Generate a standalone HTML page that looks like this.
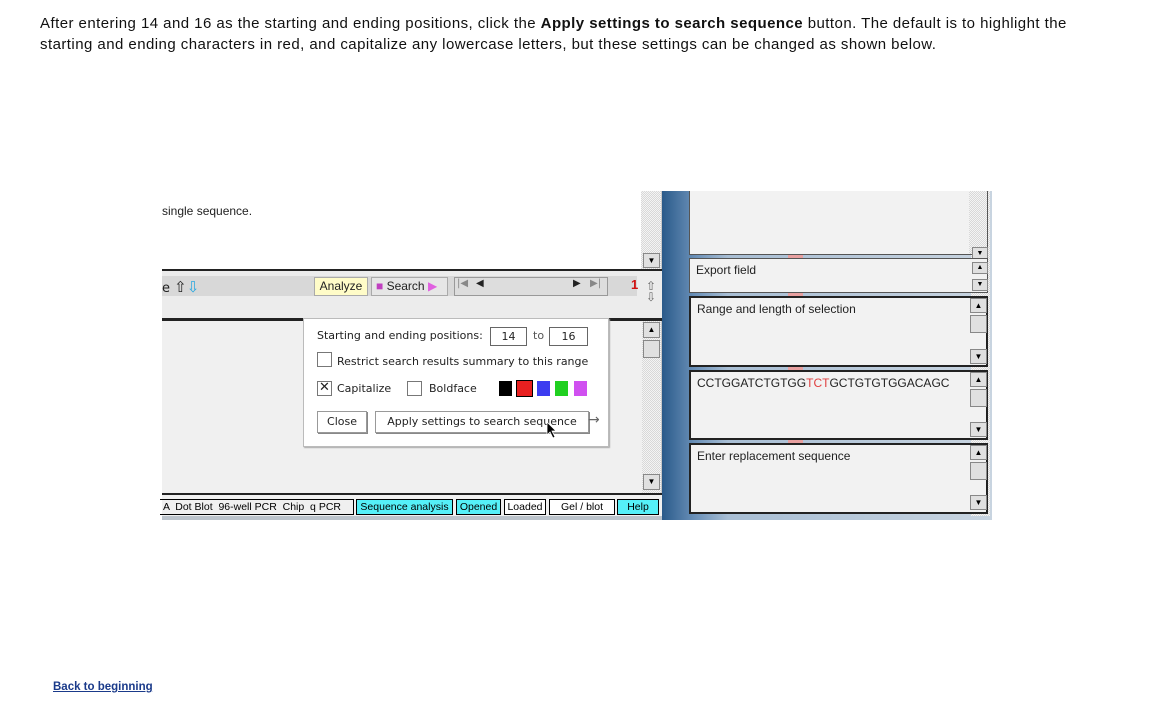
<!DOCTYPE html>
<html><head><meta charset="utf-8"><style>
body{margin:0;width:1152px;height:720px;background:#fff;position:relative;overflow:hidden;font-family:"Liberation Sans",sans-serif}
.a{position:absolute}
.t{font-size:15px;letter-spacing:0.45px;color:#111;white-space:nowrap;left:40px}
.ui{font-family:"DejaVu Sans","Liberation Sans",sans-serif;font-size:11px;color:#222;white-space:nowrap}
.sb{background:repeating-conic-gradient(#d8d8d8 0 25%,#f4f4f4 0 50%) 0 0/2px 2px}
.btn{background:#e0e0e0;border:1px solid #888;box-sizing:border-box}
.tab{position:absolute;top:499px;height:16px;border:1px solid #000;box-sizing:border-box;font-size:10.5px;line-height:14px;text-align:center;font-family:"Liberation Sans",sans-serif;white-space:nowrap;overflow:hidden}
.pn{position:absolute;left:689px;width:299px;background:#f2f2f2;border:1px solid #555;box-sizing:border-box}
.pn .ui{position:absolute;left:6px;top:4px;font-size:12px;font-family:"Liberation Sans",sans-serif}
.rs{position:absolute;right:0;top:0;bottom:0;width:18px}
</style></head><body>
<div class="a t" style="top:15px">After entering 14 and 16 as the starting and ending positions, click the <b>Apply settings to search sequence</b> button. The default is to highlight the</div>
<div class="a t" style="top:36px">starting and ending characters in red, and capitalize any lowercase letters, but these settings can be changed as shown below.</div>

<!-- left app -->
<div class="a" style="left:162px;top:191px;width:500px;height:329px;background:#c8c8c8"></div>
<div class="a" style="left:162px;top:191px;width:479px;height:78px;background:#fff"></div>
<div class="a ui" style="left:162px;top:204px;font-size:12px;font-family:'Liberation Sans',sans-serif">single sequence.</div>
<div class="a sb" style="left:641px;top:191px;width:20px;height:78px"></div>
<div class="a btn" style="left:643px;top:253px;width:17px;height:15px;font-size:8px;text-align:center;line-height:13px">▼</div>
<div class="a" style="left:162px;top:269px;width:500px;height:2px;background:#222"></div>
<div class="a" style="left:162px;top:271px;width:500px;height:48px;background:#ececec"></div>
<div class="a" style="left:162px;top:276px;width:475px;height:20px;background:#d8d8d8"></div>
<div class="a ui" style="left:162px;top:278px;font-size:13px">e <span style="font-size:15px">⇧</span><span style="color:#2aa8e0;font-size:15px">⇩</span></div>
<div class="a ui" style="left:314px;top:277px;width:52px;height:17px;background:#fffcc8;border:1px solid #aaa;font-size:12px;line-height:17px;text-align:center;font-family:'Liberation Sans',sans-serif">Analyze</div>
<div class="a ui" style="left:371px;top:277px;width:71px;height:17px;background:#e6e6e6;border:1px solid #aaa;font-size:12px;line-height:17px;padding-left:4px;font-family:'Liberation Sans',sans-serif"><span style="color:#c040c0">■</span> Search <span style="color:#e060e0">▶</span></div>
<div class="a" style="left:454px;top:277px;width:152px;height:17px;background:#ddd;border:1px solid #999"></div>
<div class="a ui" style="left:457px;top:278px;font-size:10px;color:#888">|◀</div>
<div class="a ui" style="left:476px;top:278px;font-size:10px">◀</div>
<div class="a ui" style="left:573px;top:278px;font-size:10px">▶</div>
<div class="a ui" style="left:590px;top:278px;font-size:10px;color:#888">▶|</div>
<div class="a" style="left:631px;top:277px;color:#d01010;font-weight:bold;font-size:13px">1</div>
<div class="a ui" style="left:646px;top:281px;font-size:12px;line-height:11px;color:#666">⇧<br>⇩</div>
<div class="a" style="left:162px;top:318px;width:500px;height:3px;background:#222"></div>
<div class="a" style="left:162px;top:321px;width:480px;height:172px;background:#f0f0f0"></div>
<div class="a sb" style="left:642px;top:321px;width:19px;height:172px"></div>
<div class="a btn" style="left:643px;top:322px;width:17px;height:16px;font-size:8px;text-align:center;line-height:14px">▲</div>
<div class="a btn" style="left:643px;top:340px;width:17px;height:18px"></div>
<div class="a btn" style="left:643px;top:474px;width:17px;height:16px;font-size:8px;text-align:center;line-height:14px">▼</div>
<div class="a" style="left:162px;top:493px;width:500px;height:2px;background:#222"></div>
<div class="a" style="left:162px;top:495px;width:500px;height:25px;background:#f0f0f0"></div>
<div class="a" style="left:162px;top:516px;width:500px;height:4px;background:#bcc4cc"></div>
<div class="tab" style="left:160px;width:194px;text-align:left;padding-left:3px;border-left:none">A &nbsp;Dot Blot &nbsp;96-well PCR &nbsp;Chip &nbsp;q PCR</div>
<div class="tab" style="left:356px;width:97px;background:#55f0f8">Sequence analysis</div>
<div class="tab" style="left:456px;width:45px;background:#55f0f8">Opened</div>
<div class="tab" style="left:504px;width:42px;background:#fff">Loaded</div>
<div class="tab" style="left:549px;width:66px;background:#fff">Gel / blot</div>
<div class="tab" style="left:617px;width:42px;background:#55f0f8">Help</div>

<!-- dialog -->
<div class="a" style="left:303px;top:318px;width:304px;height:127px;background:#fff;border:1px solid #bbb;box-shadow:1px 1px 1px #aaa"></div>
<div class="a ui" style="left:317px;top:329px">Starting and ending positions:</div>
<div class="a ui" style="left:490px;top:327px;width:35px;height:17px;border:1px solid #666;text-align:center;line-height:17px">14</div>
<div class="a ui" style="left:533px;top:329px;color:#555">to</div>
<div class="a ui" style="left:549px;top:327px;width:37px;height:17px;border:1px solid #666;text-align:center;line-height:17px">16</div>
<div class="a" style="left:317px;top:352px;width:13px;height:13px;border:1px solid #777"></div>
<div class="a ui" style="left:337px;top:355px">Restrict search results summary to this range</div>
<div class="a ui" style="left:317px;top:381px;width:13px;height:13px;border:1px solid #777;font-size:13px;line-height:12px;text-align:center">✕</div>
<div class="a ui" style="left:337px;top:382px">Capitalize</div>
<div class="a" style="left:407px;top:381px;width:13px;height:13px;border:1px solid #777"></div>
<div class="a ui" style="left:429px;top:382px">Boldface</div>
<div class="a" style="left:499px;top:381px;width:13px;height:15px;background:#000"></div>
<div class="a" style="left:516px;top:380px;width:15px;height:15px;background:#e82020;border:1px solid #000;box-shadow:0 0 0 1px #fff"></div>
<div class="a" style="left:537px;top:381px;width:13px;height:15px;background:#3c3cf0"></div>
<div class="a" style="left:555px;top:381px;width:13px;height:15px;background:#20d020"></div>
<div class="a" style="left:574px;top:381px;width:13px;height:15px;background:#d050f0"></div>
<div class="a ui" style="left:317px;top:411px;width:48px;height:20px;border:1px solid #999;box-shadow:1px 1px 0 #888;text-align:center;line-height:19px">Close</div>
<div class="a ui" style="left:375px;top:411px;width:212px;height:20px;border:1px solid #999;box-shadow:1px 1px 0 #888;text-align:center;line-height:19px">Apply settings to search sequence</div>
<div class="a ui" style="left:588px;top:412px;font-size:14px;color:#666">→</div>
<svg class="a" style="left:546px;top:421px" width="12" height="18"><path d="M1 1 L1 14 L4 11 L7 17 L9 16 L6 10 L10 10 Z" fill="#000" stroke="#fff" stroke-width="0.8"/></svg>

<!-- right side -->
<div class="a" style="left:662px;top:191px;width:330px;height:329px;background:linear-gradient(90deg,#2a5a8a 0,#6a90b8 10%,#a8bed4 20%,#c8d4e0 100%)"></div>
<div class="a sb" style="left:971px;top:191px;width:19px;height:325px"></div>
<div class="pn" style="top:191px;height:64px;border-top:none"><div class="rs sb"></div></div>
<div class="a btn" style="left:972px;top:247px;width:16px;height:13px;font-size:7px;text-align:center;line-height:11px">▼</div>
<div class="pn" style="top:258px;height:35px"><div class="ui">Export field</div></div>
<div class="a btn" style="left:972px;top:262px;width:16px;height:12px;font-size:7px;text-align:center;line-height:10px">▲</div>
<div class="a btn" style="left:972px;top:279px;width:16px;height:12px;font-size:7px;text-align:center;line-height:10px">▼</div>
<div class="pn" style="top:296px;height:71px;border:2px solid #222"><div class="ui">Range and length of selection</div></div>
<div class="pn" style="top:370px;height:70px;border:2px solid #222"><div class="ui">CCTGGATCTGTGG<span style="color:#e04040">TCT</span>GCTGTGTGGACAGC</div></div>
<div class="pn" style="top:443px;height:71px;border:2px solid #222"><div class="ui">Enter replacement sequence</div></div>
<div class="a btn" style="left:970px;top:298px;width:17px;height:15px;font-size:8px;text-align:center;line-height:13px">▲</div>
<div class="a btn" style="left:970px;top:315px;width:17px;height:18px"></div>
<div class="a btn" style="left:970px;top:349px;width:17px;height:15px;font-size:8px;text-align:center;line-height:13px">▼</div>
<div class="a btn" style="left:970px;top:372px;width:17px;height:15px;font-size:8px;text-align:center;line-height:13px">▲</div>
<div class="a btn" style="left:970px;top:389px;width:17px;height:18px"></div>
<div class="a btn" style="left:970px;top:422px;width:17px;height:15px;font-size:8px;text-align:center;line-height:13px">▼</div>
<div class="a btn" style="left:970px;top:445px;width:17px;height:15px;font-size:8px;text-align:center;line-height:13px">▲</div>
<div class="a btn" style="left:970px;top:462px;width:17px;height:18px"></div>
<div class="a btn" style="left:970px;top:495px;width:17px;height:15px;font-size:8px;text-align:center;line-height:13px">▼</div>
<div class="a" style="left:788px;top:255px;width:15px;height:3px;background:#e8a0a0"></div>
<div class="a" style="left:788px;top:293px;width:15px;height:3px;background:#e8a0a0"></div>
<div class="a" style="left:788px;top:367px;width:15px;height:3px;background:#e8a0a0"></div>
<div class="a" style="left:788px;top:440px;width:15px;height:3px;background:#e8a0a0"></div>

<a class="a" style="left:53px;top:681px;font-size:11.5px;font-weight:bold;color:#1a3a8a;text-decoration:underline">Back to beginning</a>
</body></html>
